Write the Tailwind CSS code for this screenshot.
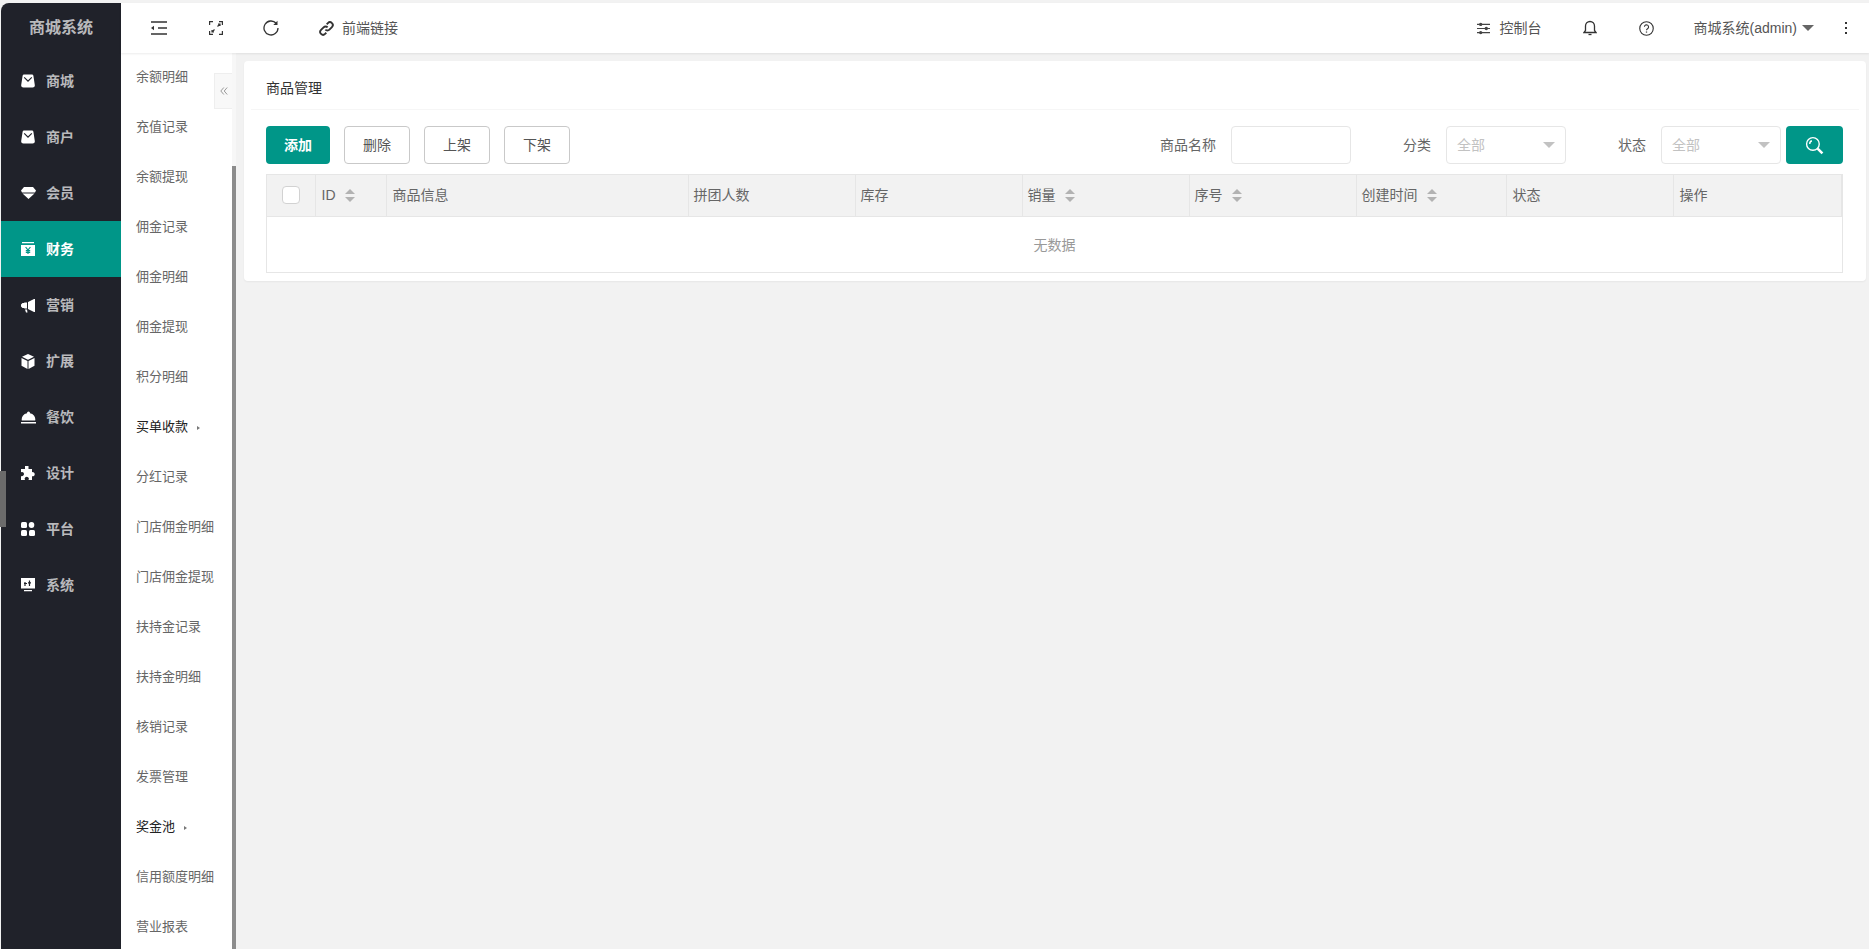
<!DOCTYPE html>
<html lang="zh-CN">
<head>
  <meta charset="UTF-8" />
  <title>商城系统</title>
  <script src="https://cdn.jsdelivr.net/npm/@tailwindcss/browser@4"></script>
</head>
<body class="h-screen overflow-hidden bg-[#f2f2f2] font-['Liberation_Sans','Noto_Sans_CJK_SC',sans-serif] text-sm text-[#666]">
  <div class="flex h-[949px] pt-[3px] pl-px">
    <!-- main nav -->
    <aside class="relative w-[120px] shrink-0 rounded-tl-lg bg-[#20222a] text-white/70">
      <div class="flex h-[50px] items-center justify-center text-base font-bold">商城系统</div>
      <nav class="text-sm font-bold">
        <a class="flex h-14 items-center pl-5 gap-[11px]">
          <svg class="size-[14px] text-white" viewBox="0 0 14 14" fill="currentColor"><path fill-rule="evenodd" d="M3 0.500h8a1.500 1.500 0 0 1 1.400 1.200L13.800 11a2.200 2.200 0 0 1-2.200 2.500H2.400A2.200 2.200 0 0 1 .2 11L1.600 1.700A1.500 1.500 0 0 1 3 .5zm.6 2.500L7 6.300 10.400 3l.8.8L7 8 2.800 3.800z"/></svg>
          商城
        </a>
        <a class="flex h-14 items-center pl-5 gap-[11px]">
          <svg class="size-[14px] text-white" viewBox="0 0 14 14" fill="currentColor"><path fill-rule="evenodd" d="M3 0.500h8a1.500 1.500 0 0 1 1.400 1.200L13.800 11a2.200 2.200 0 0 1-2.200 2.500H2.400A2.200 2.200 0 0 1 .2 11L1.600 1.700A1.500 1.500 0 0 1 3 .5zm.6 2.500L7 6.300 10.400 3l.8.8L7 8 2.800 3.800z"/></svg>
          商户
        </a>
        <a class="flex h-14 items-center pl-5 gap-[10px]">
          <svg class="h-[12px] w-[15px] text-white" viewBox="0 0 15 12" fill="currentColor"><path d="M3 0h9l3 3.500-1 2H1l-1-2zM1.500 6.500h12L7.500 12z"/></svg>
          会员
        </a>
        <a class="flex h-14 items-center pl-5 gap-[11px] bg-[#009688] text-white">
          <svg class="size-[14px] text-white" viewBox="0 0 14 14"><path fill="currentColor" d="M1 0h12v1.200H1zM0 3h14v11H0z"/><path stroke="#009688" stroke-width="1.200" fill="none" d="M4.600 5l2.400 3 2.400-3M7 8v4M4.800 8.600h4.400M4.800 10.400h4.400"/></svg>
          财务
        </a>
        <a class="flex h-14 items-center pl-5 gap-[10px]">
          <svg class="size-[15px] text-white" viewBox="0 0 15 15" fill="currentColor"><path d="M14 1v13l-1 0-6-3V4l6-3zM6 4.500v6H3.500L3 10H1.500L0 8.500v-2L1.500 5H3l.5-.5zM4 11.500h2l.5 3H5z"/></svg>
          营销
        </a>
        <a class="flex h-14 items-center pl-5 gap-[11px]">
          <svg class="h-[15px] w-[14px] text-white" viewBox="0 0 14 15" fill="currentColor"><path d="M7 0l6 2.800L7 5.800 1 2.800zM.5 4l6 3v8l-6-3.200zM13.500 4v7.800L7.500 15V7z"/></svg>
          扩展
        </a>
        <a class="flex h-14 items-center pl-5 gap-[10px]">
          <svg class="h-[13px] w-[15px] text-white" viewBox="0 0 15 13" fill="currentColor"><path d="M6 2a1.500 1.500 0 1 1 3 0v.3a6.200 6.200 0 0 1 5.200 7.200H.8A6.200 6.200 0 0 1 6 2.300zM0 11h15v1.500H0z"/></svg>
          餐饮
        </a>
        <a class="flex h-14 items-center pl-5 gap-[10px]">
          <svg class="size-[15px] text-white" viewBox="0 0 15 15" fill="currentColor"><path d="M4 0h3.500v3H11v3.200a2.100 2.100 0 1 1 0 4V14H7.500a2.100 2.100 0 1 0-3.500 0H0V10a2.100 2.100 0 1 0 0-3.800V3h4z"/></svg>
          设计
        </a>
        <a class="flex h-14 items-center pl-5 gap-[11px]">
          <svg class="size-[14px] text-white" viewBox="0 0 14 14" fill="currentColor"><rect width="6" height="6" rx="1.500"/><ellipse cx="10.500" cy="3" rx="2.800" ry="3"/><rect y="8" width="6" height="6" rx="1.500"/><rect x="8" y="8" width="6" height="6" rx="1.500"/></svg>
          平台
        </a>
        <a class="flex h-14 items-center pl-5 gap-[11px]">
          <svg class="size-[14px] text-white" viewBox="0 0 14 14"><path fill="currentColor" d="M0 0h14v10.500H0zM3 12h8v1.200H3z"/><path stroke="#20222a" stroke-width="1.200" fill="none" d="M4 4v4M6 5.500H3M8.500 2.500v5.500M7 4.800h3"/></svg>
          系统
        </a>
      </nav>
      <div class="absolute -left-px top-[468px] h-14 w-[6px] bg-[#6b6b6b]"></div>
    </aside>

    <div class="flex min-w-0 flex-1 flex-col">
      <!-- top bar -->
      <header class="relative z-10 flex h-[50px] shrink-0 items-center justify-between bg-white text-[#555] shadow-[0_1px_2px_rgba(0,0,0,0.08)]">
        <div class="flex items-center">
          <span class="ml-[30px]">
            <svg class="block h-4 w-4 text-[#333]" viewBox="0 0 16 16" fill="none" stroke="currentColor" stroke-width="1.300"><path d="M0 2h16M7 8h9M0 14h16"/><path fill="currentColor" stroke="none" d="M0 8l3-2.200v4.400z"/></svg>
          </span>
          <span class="ml-[42px]">
            <svg class="block h-[14px] w-[14px] text-[#333]" viewBox="0 0 14 14" fill="none" stroke="currentColor" stroke-width="1.200"><path d="M.6 4V.6H4M10 .6h3.400V4M13.400 10v3.400H10M4 13.400H.6V10M8.500 5.500L11 3M9 3h2v2M5.500 8.500L3 11M3 9v2h2"/></svg>
          </span>
          <span class="ml-[40px]">
            <svg class="block h-4 w-4 text-[#333]" viewBox="0 0 16 16" fill="none" stroke="currentColor" stroke-width="1.300"><path d="M13.200 3.300A7 7 0 1 0 15 8"/><path fill="currentColor" stroke="none" d="M14.500 .8v4.200h-4.200z"/></svg>
          </span>
          <span class="ml-[40px]">
            <svg class="block h-[15px] w-[15px] text-[#333]" viewBox="0 0 16 16" fill="none" stroke="currentColor" stroke-width="2"><path d="M6.800 9.200a3 3 0 0 0 4.300 0l2.700-2.700a3 3 0 0 0-4.300-4.300L8.200 3.500"/><path d="M9.200 6.800a3 3 0 0 0-4.300 0L2.200 9.500a3 3 0 0 0 4.300 4.300l1.300-1.300"/></svg>
          </span>
          <span class="ml-2 leading-none">前端链接</span>
        </div>
        <div class="flex items-center">
          <svg class="h-[13px] w-[13px] text-[#444]" viewBox="0 0 14 14" fill="currentColor"><path d="M0 2h14v1.200H0zM0 6.400h14v1.200H0zM0 10.800h14V12H0z"/><circle cx="4" cy="2.600" r="1.800"/><circle cx="10" cy="7" r="1.800"/><circle cx="4" cy="11.400" r="1.800"/></svg>
          <span class="ml-[10px]">控制台</span>
          <svg class="ml-[41px] h-4 w-[14px] text-[#333]" viewBox="0 0 14 16" fill="none" stroke="currentColor" stroke-width="1.300"><path d="M1 12.500h12l-1.500-2V6a4.500 4.500 0 0 0-9 0v4.500z"/><path d="M5.500 14.500h3"/></svg>
          <svg class="ml-[42px] h-[15px] w-[15px] text-[#333]" viewBox="0 0 16 16" fill="none" stroke="currentColor" stroke-width="1.200"><circle cx="8" cy="8" r="7.200"/><path d="M5.800 6.200a2.200 2.200 0 1 1 3.300 2c-.8.500-1.100.9-1.100 1.600"/><path d="M8 11.200v1.200" stroke-width="1.400"/></svg>
          <span class="ml-[40px]">商城系统(admin)</span>
          <span class="ml-[5px] h-0 w-0 border-x-[6px] border-t-[6px] border-x-transparent border-t-[#666]"></span>
          <span class="mr-[22px] ml-[31px] flex flex-col gap-[3px]">
            <i class="size-[2px] bg-[#333]"></i><i class="size-[2px] bg-[#333]"></i><i class="size-[2px] bg-[#333]"></i>
          </span>
        </div>
      </header>

      <div class="relative flex min-h-0 flex-1">
        <!-- sub nav -->
        <aside class="relative w-[111px] shrink-0 overflow-hidden bg-white text-[13px]">
          <ul class="-mt-px">
            <li class="flex h-[50px] items-center pl-[15px]">余额明细</li>
            <li class="flex h-[50px] items-center pl-[15px]">充值记录</li>
            <li class="flex h-[50px] items-center pl-[15px]">余额提现</li>
            <li class="flex h-[50px] items-center pl-[15px]">佣金记录</li>
            <li class="flex h-[50px] items-center pl-[15px]">佣金明细</li>
            <li class="flex h-[50px] items-center pl-[15px]">佣金提现</li>
            <li class="flex h-[50px] items-center pl-[15px]">积分明细</li>
            <li class="flex h-[50px] items-center pl-[15px] text-[#222]">买单收款<span class="mt-0.5 ml-[9px] h-0 w-0 border-y-[2.500px] border-l-[3px] border-y-transparent border-l-[#777]"></span></li>
            <li class="flex h-[50px] items-center pl-[15px]">分红记录</li>
            <li class="flex h-[50px] items-center pl-[15px]">门店佣金明细</li>
            <li class="flex h-[50px] items-center pl-[15px]">门店佣金提现</li>
            <li class="flex h-[50px] items-center pl-[15px]">扶持金记录</li>
            <li class="flex h-[50px] items-center pl-[15px]">扶持金明细</li>
            <li class="flex h-[50px] items-center pl-[15px]">核销记录</li>
            <li class="flex h-[50px] items-center pl-[15px]">发票管理</li>
            <li class="flex h-[50px] items-center pl-[15px] text-[#222]">奖金池<span class="mt-0.5 ml-[9px] h-0 w-0 border-y-[2.500px] border-l-[3px] border-y-transparent border-l-[#777]"></span></li>
            <li class="flex h-[50px] items-center pl-[15px]">信用额度明细</li>
            <li class="flex h-[50px] items-center pl-[15px]">营业报表</li>
          </ul>
          <div class="absolute top-5 right-0 flex h-9 w-[18px] items-center justify-center border border-r-0 border-[#eee] bg-[#f8f8f8]">
            <svg class="h-2 w-2 text-[#999]" viewBox="0 0 8 8" fill="none" stroke="currentColor"><path d="M3.800 .5L.8 4l3 3.500M7.200 .5L4.200 4l3 3.500"/></svg>
          </div>
        </aside>

        <!-- scrollbar of the sub nav -->
        <div class="relative w-1 shrink-0 bg-[#f7f7f7]">
          <div class="absolute top-[113px] bottom-0 w-full bg-[#8c8c8c]"></div>
        </div>

        <!-- content -->
        <main class="min-w-0 flex-1 pt-2 pr-[3px] pl-2">
          <section class="h-[220px] rounded-sm bg-white shadow-[0_1px_2px_rgba(0,0,0,0.05)]">
            <div class="mx-[7px] flex h-[49px] items-center border-b border-[#f6f6f6] pt-[6px] pl-[15px] text-[#333]">商品管理</div>
            <div class="flex items-start justify-between pt-4 pr-[23px] pl-[22px]">
              <div class="flex gap-[14px]">
                <button class="h-[38px] w-16 rounded-sm bg-[#009688] font-bold text-white">添加</button>
                <button class="h-[38px] w-[66px] rounded-sm border border-[#c9c9c9] bg-white text-[#555]">删除</button>
                <button class="h-[38px] w-[66px] rounded-sm border border-[#c9c9c9] bg-white text-[#555]">上架</button>
                <button class="h-[38px] w-[66px] rounded-sm border border-[#c9c9c9] bg-white text-[#555]">下架</button>
              </div>
              <div class="flex items-center">
                <label class="pr-[15px]">商品名称</label>
                <input class="h-[38px] w-[120px] rounded-sm border border-[#e6e6e6] bg-white" />
                <label class="w-[95px] pr-[15px] text-right">分类</label>
                <div class="flex h-[38px] w-[120px] items-center justify-between rounded-sm border border-[#e6e6e6] bg-white pr-[10px] pl-[10px] text-[#c2c2c2]">
                  全部<span class="h-0 w-0 border-x-[6px] border-t-[6px] border-x-transparent border-t-[#c2c2c2]"></span>
                </div>
                <label class="w-[95px] pr-[15px] text-right">状态</label>
                <div class="flex h-[38px] w-[120px] items-center justify-between rounded-sm border border-[#e6e6e6] bg-white pr-[10px] pl-[10px] text-[#c2c2c2]">
                  全部<span class="h-0 w-0 border-x-[6px] border-t-[6px] border-x-transparent border-t-[#c2c2c2]"></span>
                </div>
                <button class="ml-[5px] flex h-[38px] w-[57px] items-center justify-center rounded-sm bg-[#009688]">
                  <svg class="size-[19px] text-white" viewBox="0 0 18 18" fill="none" stroke="currentColor" stroke-width="1.300"><circle cx="7.500" cy="7.500" r="6"/><path d="M4.500 7.500a3 3 0 0 1 2-3"/><path stroke-width="2.400" d="M12 12l4.500 4.500"/></svg>
                </button>
              </div>
            </div>
            <div class="mt-[10px] mr-[23px] ml-[22px] h-[99px] border border-[#e6e6e6]">
              <table class="w-full table-fixed border-collapse text-left">
                <thead>
                  <tr class="h-[41px] border-b border-[#e6e6e6] bg-[#f2f2f2]">
                    <th class="w-12 border-r border-[#e6e6e6] font-normal">
                      <span class="mx-auto block size-[18px] rounded-sm border border-[#d2d2d2] bg-white"></span>
                    </th>
                    <th class="w-[71px] border-r border-[#e6e6e6] pl-[5px] font-normal">
                      <div class="flex items-center gap-[9px] pl-px">ID
                        <span class="flex flex-col gap-[3px]"><i class="h-0 w-0 border-x-[5px] border-b-[5px] border-x-transparent border-b-[#b2b2b2]"></i><i class="h-0 w-0 border-x-[5px] border-t-[5px] border-x-transparent border-t-[#b2b2b2]"></i></span>
                      </div>
                    </th>
                    <th class="w-[302px] border-r border-[#e6e6e6] pl-[6px] font-normal">商品信息</th>
                    <th class="w-[167px] border-r border-[#e6e6e6] pl-[5px] font-normal">拼团人数</th>
                    <th class="w-[167px] border-r border-[#e6e6e6] pl-[5px] font-normal">库存</th>
                    <th class="w-[167px] border-r border-[#e6e6e6] pl-[5px] font-normal">
                      <div class="flex items-center gap-[9px]">销量
                        <span class="flex flex-col gap-[3px]"><i class="h-0 w-0 border-x-[5px] border-b-[5px] border-x-transparent border-b-[#b2b2b2]"></i><i class="h-0 w-0 border-x-[5px] border-t-[5px] border-x-transparent border-t-[#b2b2b2]"></i></span>
                      </div>
                    </th>
                    <th class="w-[167px] border-r border-[#e6e6e6] pl-[5px] font-normal">
                      <div class="flex items-center gap-[9px]">序号
                        <span class="flex flex-col gap-[3px]"><i class="h-0 w-0 border-x-[5px] border-b-[5px] border-x-transparent border-b-[#b2b2b2]"></i><i class="h-0 w-0 border-x-[5px] border-t-[5px] border-x-transparent border-t-[#b2b2b2]"></i></span>
                      </div>
                    </th>
                    <th class="w-[150px] border-r border-[#e6e6e6] pl-[5px] font-normal">
                      <div class="flex items-center gap-[9px]">创建时间
                        <span class="flex flex-col gap-[3px]"><i class="h-0 w-0 border-x-[5px] border-b-[5px] border-x-transparent border-b-[#b2b2b2]"></i><i class="h-0 w-0 border-x-[5px] border-t-[5px] border-x-transparent border-t-[#b2b2b2]"></i></span>
                      </div>
                    </th>
                    <th class="w-[167px] border-r border-[#e6e6e6] pl-[6px] font-normal">状态</th>
                    <th class="border-r border-[#e6e6e6] pl-[6px] font-normal">操作</th>
                  </tr>
                </thead>
              </table>
              <div class="flex h-14 items-center justify-center text-[#999]">无数据</div>
            </div>
          </section>
        </main>
      </div>
    </div>
  </div>
</body>
</html>
